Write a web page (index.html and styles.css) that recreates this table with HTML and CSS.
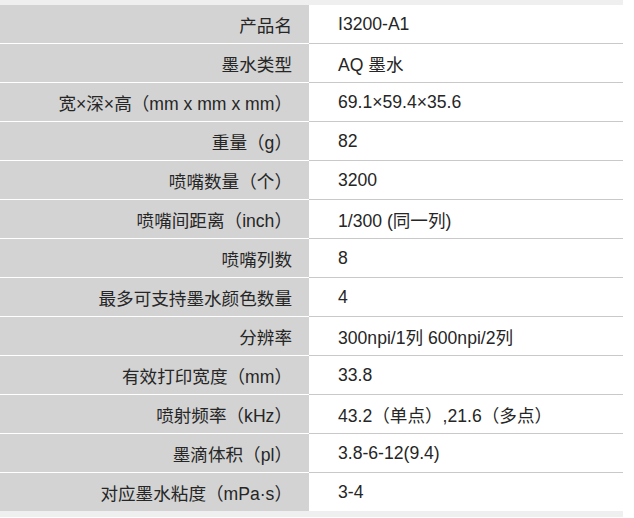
FILE: index.html
```html
<!DOCTYPE html>
<html lang="zh">
<head>
<meta charset="utf-8">
<link rel="stylesheet" href="styles.css">
</head>
<body>
<div class="frame">
<table class="spec">
<tr><th>产品名</th><td>I3200-A1</td></tr>
<tr><th>墨水类型</th><td>AQ 墨水</td></tr>
<tr><th>宽×深×高（mm x mm x mm）</th><td>69.1×59.4×35.6</td></tr>
<tr><th>重量（g）</th><td>82</td></tr>
<tr><th>喷嘴数量（个）</th><td>3200</td></tr>
<tr><th>喷嘴间距离（inch）</th><td>1/300 (同一列)</td></tr>
<tr><th>喷嘴列数</th><td>8</td></tr>
<tr><th>最多可支持墨水颜色数量</th><td>4</td></tr>
<tr><th>分辨率</th><td>300npi/1列 600npi/2列</td></tr>
<tr><th>有效打印宽度（mm）</th><td>33.8</td></tr>
<tr><th>喷射频率（kHz）</th><td>43.2（单点）,21.6（多点）</td></tr>
<tr><th>墨滴体积（pl）</th><td>3.8-6-12(9.4)</td></tr>
<tr><th>对应墨水粘度（mPa·s）</th><td>3-4</td></tr>
</table>
</div>
</body>
</html>
```
FILE: styles.css
```css
html, body {
  margin: 0;
  padding: 0;
  background: #ffffff;
}
.frame {
  width: 623px;
  background: #efefef;
  padding: 5px 0 6px 0;
}
.spec {
  width: 623px;
  border-collapse: collapse;
  font-family: "Liberation Sans", "Noto Sans CJK SC", sans-serif;
  font-size: 17.6px;
  color: #262626;
}
.spec th,
.spec td {
  height: 38px;
  padding: 0;
  font-weight: normal;
  vertical-align: middle;
}
.spec th {
  width: 309px;
  background: #d3d3d3;
  text-align: right;
  padding-right: 17px;
  box-sizing: border-box;
  border-bottom: 1px solid #ffffff;
}
.spec td {
  background: #ffffff;
  text-align: left;
  padding-left: 29px;
  border-bottom: 1px solid #c9c9c9;
}
.spec tr:last-child th,
.spec tr:last-child td {
  border-bottom: none;
}
```
